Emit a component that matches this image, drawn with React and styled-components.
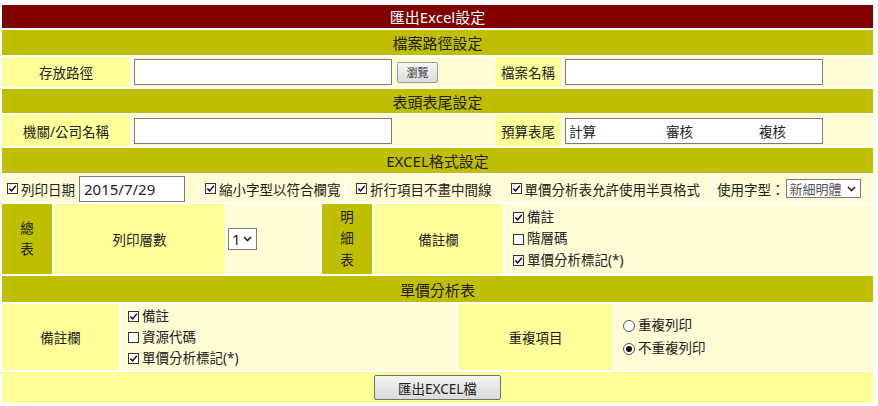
import React from 'react';
import styled, { createGlobalStyle } from 'styled-components';

const GlobalStyle = createGlobalStyle`
    body {
        margin: 0;
        background: #fff;
        font-family: "Noto Sans", "Noto Sans CJK TC", sans-serif;
        color: #222;
    }
`;

const OLIVE = '#bfbf00';
const LABEL = '#ffff99';
const VALUE = '#fffcd6';

const Page = styled.div`
    width: 871px;
    margin: 5px 0 0 2px;
    display: flex;
    flex-direction: column;
    gap: 2px;
`;

const Title = styled.div`
    height: 23px;
    background-color: #800000;
    color: #fff;
    font-size: 15px;
    display: flex;
    align-items: center;
    justify-content: center;
`;

const Section = styled.div`
    height: ${(p) => p.$h || 25}px;
    background-color: ${OLIVE};
    color: #222;
    font-size: 15px;
    display: flex;
    align-items: center;
    justify-content: center;
`;

const Row = styled.div`
    height: ${(p) => p.$h}px;
    display: flex;
    gap: 2px;
`;

const Label = styled.div`
    width: ${(p) => p.$w}px;
    flex-shrink: 0;
    background-color: ${LABEL};
    font-size: 13.5px;
    display: flex;
    align-items: center;
    justify-content: center;
`;

const Cell = styled.div`
    width: ${(p) => p.$w}px;
    flex-shrink: 0;
    box-sizing: border-box;
    padding-left: ${(p) => p.$pl || 0}px;
    background-color: ${(p) => (p.$yellow ? LABEL : VALUE)};
    font-size: 13.5px;
    display: flex;
    align-items: center;
    justify-content: ${(p) => (p.$center ? 'center' : 'flex-start')};
`;

const Stack = styled.div`
    display: flex;
    flex-direction: column;
    line-height: ${(p) => p.$lh || 21}px;
`;

const SideHead = styled.div`
    width: 50px;
    flex-shrink: 0;
    background-color: ${OLIVE};
    font-size: 13.5px;
    line-height: 21.5px;
    display: flex;
    flex-direction: column;
    align-items: center;
    justify-content: center;
`;

const TextBox = styled.input`
    width: ${(p) => p.$w}px;
    height: ${(p) => p.$h || 26}px;
    box-sizing: border-box;
    border: 1px solid #7a7a7a;
    background: #fff;
    margin: 0;
    padding: 0 4px;
    font-family: "Noto Sans", sans-serif;
    font-size: 15px;
    color: #222;
    outline: none;
`;

const FooterBox = styled.div`
    width: 258px;
    height: 26px;
    box-sizing: border-box;
    border: 1px solid #7a7a7a;
    background: #fff;
    padding-left: 3px;
    display: grid;
    grid-template-columns: 97px 93px auto;
    align-items: center;
    font-size: 13.5px;
`;

const BrowseButton = styled.button`
    width: 41px;
    height: 21px;
    margin-left: 5px;
    padding: 0;
    border: 1px solid #9a9a9a;
    border-radius: 2px;
    background: linear-gradient(#f6f6f6, #dcdcdc);
    font-family: "Noto Sans CJK TC", sans-serif;
    font-size: 11px;
    color: #333;
`;

const ExportButton = styled.button`
    width: 127px;
    height: 25px;
    padding: 0;
    border: 1px solid #707070;
    border-radius: 2px;
    background: linear-gradient(#f4f4f4, #dadada);
    font-family: "Noto Sans", "Noto Sans CJK TC", sans-serif;
    font-size: 13.5px;
    color: #222;
`;

const SelectBox = styled.div`
    width: ${(p) => p.$w}px;
    height: ${(p) => p.$h}px;
    box-sizing: border-box;
    border: 1px solid #7a7a7a;
    background: #fff;
    display: flex;
    align-items: center;
    justify-content: space-between;
    padding: 0 4px 0 ${(p) => p.$pl || 3}px;
    font-size: ${(p) => p.$fs || 13.5}px;
    color: ${(p) => p.$color || '#222'};
    margin-left: ${(p) => p.$ml || 0}px;
`;

const Item = styled.span`
    display: inline-flex;
    align-items: center;
    white-space: nowrap;
    margin-left: ${(p) => p.$ml || 0}px;
`;

const Box = styled.span`
    width: 11px;
    height: 11px;
    box-sizing: border-box;
    border: 1px solid #333;
    background: #fff;
    margin-right: 3px;
    display: inline-flex;
    align-items: center;
    justify-content: center;
    flex-shrink: 0;
`;

const Circle = styled.span`
    width: 12px;
    height: 12px;
    box-sizing: border-box;
    border: 1px solid #555;
    border-radius: 50%;
    background: #fff;
    margin-right: 3px;
    display: inline-flex;
    align-items: center;
    justify-content: center;
    flex-shrink: 0;

    &::after {
        content: '';
        width: 6px;
        height: 6px;
        border-radius: 50%;
        background: ${(p) => (p.$on ? '#111' : 'transparent')};
    }
`;

const DateLabel = styled.span`
    margin-right: 4px;
`;

const Check = ({ on, children, ml }) => (
    <Item $ml={ml}>
        <Box>
            {on && (
                <svg width="9" height="9" viewBox="0 0 9 9">
                    <path d="M1.3 4.6 L3.6 6.9 L7.8 1.8" fill="none" stroke="#111" strokeWidth="1.5" />
                </svg>
            )}
        </Box>
        {children}
    </Item>
);

const Radio = ({ on, children }) => (
    <Item>
        <Circle $on={on} />
        {children}
    </Item>
);

const Chevron = () => (
    <svg width="9" height="6" viewBox="0 0 9 6">
        <path d="M1 1 L4.5 4.6 L8 1" fill="none" stroke="#222" strokeWidth="1.5" />
    </svg>
);

const App = () => {
    return (
        <>
            <GlobalStyle />
            <Page>
                <Title>匯出Excel設定</Title>

                <Section>檔案路徑設定</Section>
                <Row $h={30}>
                    <Label $w={128}>存放路徑</Label>
                    <Cell $w={361} $pl={2}>
                        <TextBox $w={258} />
                        <BrowseButton>瀏覽</BrowseButton>
                    </Cell>
                    <Label $w={66}>檔案名稱</Label>
                    <Cell $w={310} $pl={2}>
                        <TextBox $w={258} />
                    </Cell>
                </Row>

                <Section $h={24}>表頭表尾設定</Section>
                <Row $h={31}>
                    <Label $w={128}>機關/公司名稱</Label>
                    <Cell $w={361} $pl={2}>
                        <TextBox $w={258} />
                    </Cell>
                    <Label $w={66}>預算表尾</Label>
                    <Cell $w={310} $pl={2}>
                        <FooterBox>
                            <span>計算</span>
                            <span>審核</span>
                            <span>複核</span>
                        </FooterBox>
                    </Cell>
                </Row>

                <Section>EXCEL格式設定</Section>
                <Row $h={27}>
                    <Cell $w={342} $pl={5}>
                        <Check on>列印日期</Check>
                        <DateLabel />
                        <TextBox $w={106} $h={26} defaultValue="2015/7/29" />
                        <Check on ml={20}>縮小字型以符合欄寬</Check>
                    </Cell>
                    <Cell $w={367} $pl={10}>
                        <Check on>折行項目不畫中間線</Check>
                        <Check on ml={19}>單價分析表允許使用半頁格式</Check>
                    </Cell>
                    <Cell $w={158} $pl={2}>
                        使用字型：
                        <SelectBox $w={75} $h={19} $fs={13} $color="#555" $ml={1}>
                            <span>新細明體</span>
                            <Chevron />
                        </SelectBox>
                    </Cell>
                </Row>

                <Row $h={70}>
                    <SideHead>
                        <span>總</span>
                        <span>表</span>
                    </SideHead>
                    <Label $w={171}>列印層數</Label>
                    <Cell $w={93} $pl={1}>
                        <SelectBox $w={29} $h={22} $fs={15} $pl={3}>
                            <span>1</span>
                            <Chevron />
                        </SelectBox>
                    </Cell>
                    <SideHead>
                        <span>明</span>
                        <span>細</span>
                        <span>表</span>
                    </SideHead>
                    <Label $w={129}>備註欄</Label>
                    <Cell $w={368} $pl={8}>
                        <Stack $lh={21.5}>
                            <Check on>備註</Check>
                            <Check>階層碼</Check>
                            <Check on>單價分析標記(*)</Check>
                        </Stack>
                    </Cell>
                </Row>

                <Section $h={26}>單價分析表</Section>
                <Row $h={66}>
                    <Label $w={117}>備註欄</Label>
                    <Cell $w={335} $pl={7}>
                        <Stack $lh={21}>
                            <Check on>備註</Check>
                            <Check>資源代碼</Check>
                            <Check on>單價分析標記(*)</Check>
                        </Stack>
                    </Cell>
                    <Label $w={155}>重複項目</Label>
                    <Cell $w={258} $pl={8}>
                        <Stack $lh={23}>
                            <Radio>重複列印</Radio>
                            <Radio on>不重複列印</Radio>
                        </Stack>
                    </Cell>
                </Row>

                <Row $h={31}>
                    <Cell $w={871} $yellow $center>
                        <ExportButton>匯出EXCEL檔</ExportButton>
                    </Cell>
                </Row>
            </Page>
        </>
    );
};

export default App;
